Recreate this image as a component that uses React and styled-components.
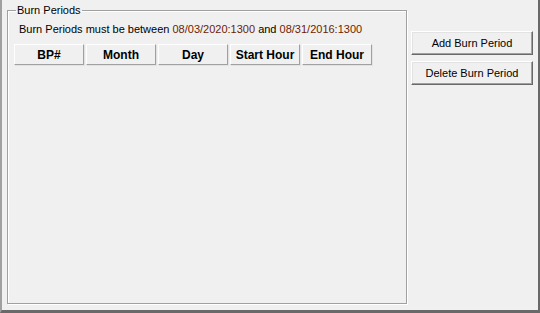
import React from "react";
import styled, { createGlobalStyle } from "styled-components";

const GlobalStyle = createGlobalStyle`
  html, body {
    margin: 0;
    padding: 0;
    background: #f0f0f0;
  }
  * { box-sizing: border-box; }
`;

const columns = ["BP#", "Month", "Day", "Start Hour", "End Hour"];

function App() {
  return (
    <>
      <GlobalStyle />
      <StWindow>
        <StGroup>
          <StLegend>Burn Periods</StLegend>
          <StNote>
            Burn Periods must be between <StDate>08/03/2020:1300</StDate> and{" "}
            <StDate>08/31/2016:1300</StDate>
          </StNote>
          <StHeaderRow>
            {columns.map((c) => (
              <StHeaderCell key={c}>{c}</StHeaderCell>
            ))}
          </StHeaderRow>
        </StGroup>
        <StSide>
          <StButton type="button">Add Burn Period</StButton>
          <StButton type="button">Delete Burn Period</StButton>
        </StSide>
      </StWindow>
    </>
  );
}

export default App;

const StWindow = styled.div`
  width: 540px;
  height: 313px;
  display: flex;
  align-items: flex-start;
  gap: 4px;
  padding: 3px 0 0 5px;
  border-left: 2px solid #a0a0a0;
  border-right: 2px solid #696969;
  border-bottom: 3px solid #696969;
  background: #f0f0f0;
  font-family: "Liberation Sans", Arial, sans-serif;
  font-size: 11px;
  color: #000;
`;

const StGroup = styled.fieldset`
  width: 400px;
  height: 301px;
  margin: 0;
  padding: 6px 0 0 6px;
  border: 1px solid #a0a0a0;
  box-shadow: inset 1px 1px 0 #ffffff, 1px 1px 0 #ffffff;
  min-width: 0;
`;

const StLegend = styled.legend`
  margin-left: 2px;
  padding: 0 1px;
  font-size: 11px;
  line-height: 14px;
`;

const StNote = styled.div`
  padding-left: 5px;
  line-height: 13px;
  white-space: nowrap;
`;

const StDate = styled.span`
  color: #6e1c00;
`;

const StHeaderRow = styled.div`
  display: flex;
  gap: 2px;
  margin-top: 8px;
`;

const StHeaderCell = styled.div`
  width: 70px;
  height: 21px;
  display: flex;
  align-items: center;
  justify-content: center;
  font-weight: bold;
  font-size: 12px;
  background: #f0f0f0;
  border-top: 1px solid #ffffff;
  border-left: 1px solid #ffffff;
  border-right: 1px solid #a0a0a0;
  border-bottom: 1px solid #a0a0a0;
  box-shadow: 1px 1px 0 #e3e3e3;
`;

const StSide = styled.div`
  display: flex;
  flex-direction: column;
  gap: 6px;
  padding-top: 28px;
`;

const StButton = styled.button`
  width: 122px;
  height: 24px;
  margin: 0;
  padding: 0;
  background: #f0f0f0;
  font-family: "Liberation Sans", Arial, sans-serif;
  font-size: 11px;
  color: #000;
  border-style: solid;
  border-width: 1px;
  border-color: #ffffff #696969 #696969 #ffffff;
  box-shadow: inset -1px -1px 0 #a0a0a0, inset 1px 1px 0 #e3e3e3;
  cursor: pointer;
`;
